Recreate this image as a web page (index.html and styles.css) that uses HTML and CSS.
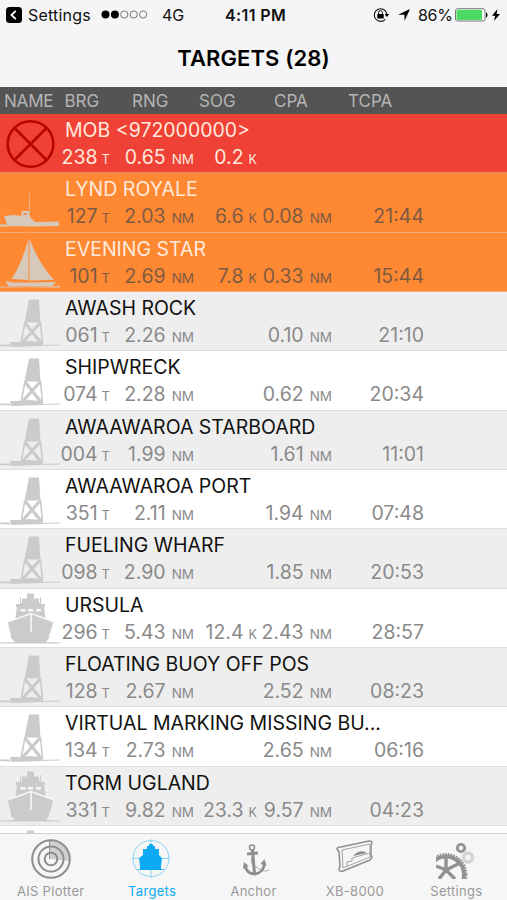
FILE: index.html
```
<!DOCTYPE html>
<html lang="en">
  <head>
    <meta charset="UTF-8" />
    <meta name="viewport" content="width=device-width, initial-scale=1.0" />
    <title>Targets</title>
    <link rel="stylesheet" href="styles.css">
  </head>
  <body>
    <!-- Shared vessel icons -->
    <svg class="sprite" aria-hidden="true">
      <symbol id="icon-mob" viewBox="0 0 60 59">
        <g fill="none" stroke="#b80500" stroke-width="2.6">
          <circle cx="30.5" cy="30" r="22.8" />
          <path d="M14.5 14 46.5 46M46.5 14 14.5 46" />
        </g>
      </symbol>
      <symbol id="icon-boat" viewBox="0 0 60 59">
        <path d="M29 20h1v20h-1z" opacity=".6" />
        <path d="M4 43l10-1 7 1 1-5h7l1 6 5 5 24-.500v4.500l-26 .500-26-.500-1-5z" />
        <path d="M0 51.500h10v2H0z" />
        <path d="M23.500 40h3v2h-3z" fill="#e98a4c" />
      </symbol>
      <symbol id="icon-sail" viewBox="0 0 60 59">
        <path d="M28.500 6v41l-17-1C18 37 24 22 28.500 6z" />
        <path d="M29.500 6c6 16 15 31 24.500 41l-24.500.500z" />
        <path d="M5 48l8 1.500h20L56 49l-4 4.500H9z" />
        <path d="M0 53.500c20 1 40 1 60-.500v1.500H0z" />
      </symbol>
      <symbol id="icon-buoy" viewBox="0 0 60 59">
        <path d="M29 7.500h10l1.500 23H24.500z" />
        <g fill="none" stroke="currentColor" stroke-width="1.600">
          <path d="M25 30l-4 22M40.500 30l2 22" />
          <path d="M25 31l16 20M40 31 22 51" stroke-width="3.200" />
        </g>
        <path d="M10 50h11l8-1 13 1 1 4-32 1z" />
        <path d="M0 52.500l10 0v2L0 54z" />
        <path d="M40 53l20-.500v1l-20 .500z" />
      </symbol>
      <symbol id="icon-ship" viewBox="0 0 60 59">
        <path d="M27 4.500h7v5h5V14h1V8h1v7h4v3h-1l2 14H15l2-14h-1v-3h4V8h1v6h1V9.500h5z" />
        <path d="M30.500 24 53 33c-1 8-4 11-4 16l-3 4H15l-4-4c0-5-2-8-3-16z" />
        <path d="M20.500 20h5v2.500h-5zM28 20h5v2.500h-5zM36 20h5v2.500h-5z" class="cut" />
        <path d="M9 32.500 31 24.500l22 8M31 25v18" class="cut-line" />
        <path d="M0 53.500c20-1 40-1 60 0v1H0z" />
      </symbol>
    </svg>

    <div class="status-bar">
      <svg class="back-icon" width="16" height="16" viewBox="0 0 16 16">
        <rect width="16" height="16" rx="3.500" />
        <path d="M9.800 3.800 5.400 8l4.400 4.200" fill="none" stroke="#fff" stroke-width="1.800" />
      </svg>
      <span class="back-label">Settings</span>
      <svg class="signal" width="47" height="9" viewBox="0 0 47 9">
        <circle cx="4.500" cy="4.500" r="4" />
        <circle cx="13.900" cy="4.500" r="4" />
        <g fill="none" stroke="#555" stroke-width=".8">
          <circle cx="23.300" cy="4.500" r="3.600" />
          <circle cx="32.700" cy="4.500" r="3.600" />
          <circle cx="42.100" cy="4.500" r="3.600" />
        </g>
      </svg>
      <span class="network">4G</span>
      <span class="clock">4:11 PM</span>
      <svg class="lock-icon" width="17" height="16" viewBox="0 0 17 16">
        <path d="M12.300 12.300A6.300 6.300 0 1 1 13.800 7" fill="none" stroke="#111" stroke-width="1.100" />
        <path d="M11.600 7h4.600l-2.300 3z" />
        <rect x="4.300" y="7" width="6.400" height="4.600" rx=".6" />
        <path d="M5.600 7V5.600a1.900 1.900 0 0 1 3.800 0V7" fill="none" stroke="#111" />
      </svg>
      <svg class="location-icon" width="12" height="12" viewBox="0 0 12 12">
        <path d="M12 0 6.500 12V5.700H0z" />
      </svg>
      <span class="percent">86%</span>
      <svg class="battery" width="34" height="14" viewBox="0 0 34 14">
        <rect x=".5" y=".7" width="29.500" height="12.300" rx="2" fill="#fff" stroke="#777" />
        <rect x="1.500" y="1.700" width="25.500" height="10.300" rx="1" fill="#4cd964" />
        <path d="M31 4.500c2 .5 2 4.500 0 5z" />
      </svg>
      <svg class="bolt" width="8" height="12" viewBox="0 0 8 12">
        <path d="M5.500 0 0 6.700h3.200L2 12l6-7H4.600z" />
      </svg>
    </div>

    <h1 class="title">TARGETS (28)</h1>

    <div class="columns">
      <span class="col-name">NAME</span>
      <span class="col-brg">BRG</span>
      <span class="col-rng">RNG</span>
      <span class="col-sog">SOG</span>
      <span class="col-cpa">CPA</span>
      <span>TCPA</span>
    </div>

    <div id="targetList"></div>

    <nav class="tab-bar">
      <div class="tab">
        <svg width="40" height="40" viewBox="0 0 40 40">
          <path d="M18 20V1a19 19 0 0 1 21 21z" fill="#d0d0d0" />
          <path d="M18.500 20V1" stroke="#8e8e8e" />
          <g fill="none" stroke="#8e8e8e" stroke-width="2">
            <circle cx="20" cy="20" r="18.800" />
            <circle cx="20" cy="20" r="12.500" />
            <circle cx="20" cy="20" r="6.300" />
          </g>
        </svg>
        <span>AIS Plotter</span>
      </div>
      <div class="tab active">
        <svg width="40" height="40" viewBox="0 0 40 40">
          <g fill="none" stroke="#8ed2f5">
            <circle cx="19" cy="19.500" r="18" />
            <path d="M19 0v39M0 19.500h38" />
          </g>
          <path d="M17 7V5h4v2h2v3h4v6l3 3-1 8v3l5 1H4l4-1v-3l-1-8 4-3v-6h4V7z" fill="#0caaf2" />
        </svg>
        <span>Targets</span>
      </div>
      <div class="tab">
        <svg width="40" height="40" viewBox="0 0 40 40">
          <g fill="none" stroke="#8e8e8e">
            <circle cx="18" cy="8.500" r="2.500" stroke-width="1.600" />
            <path d="M18.500 11l2 24" stroke-width="3" />
            <path d="M13 15l11-1" stroke-width="2.800" />
            <path d="M11 26c1 6 5 9 10 9 6-1 9-5 9.500-11" stroke-width="2.800" />
            <path d="M18 18c-2 5 0 8 4 10s8 6 13 3" stroke-width=".7" />
          </g>
          <path d="M9 30l1-7 4.500 4zM26.500 25l4-5 2 7z" fill="#8e8e8e" />
        </svg>
        <span>Anchor</span>
      </div>
      <div class="tab">
        <svg width="40" height="40" viewBox="0 0 40 40">
          <g fill="none" stroke="#8e8e8e" stroke-linejoin="round">
            <path d="M6 8 34 2c2 0 3 0 3 2l-1 2v10l1 2-2 3L8 32c-2 1-4 0-4-2l1-3L4 13 2 10c0-2 2-2 4-2z" stroke-width="1.500" />
            <path d="M7 11l28-6v13L8 29zM12 28v-5l5-1v-3l18-5" stroke-width=".8" />
          </g>
          <path d="M18 17c4-5 10-6 14-3z" fill="#8e8e8e" />
        </svg>
        <span>XB-8000</span>
      </div>
      <div class="tab">
        <svg width="40" height="40" viewBox="0 0 40 40">
          <g fill="none" stroke="#929292">
            <circle cx="10" cy="35.500" r="18" stroke-width="4" />
            <circle cx="10" cy="35.500" r="20.500" stroke-width="2" stroke-dasharray="1.600 1.200" />
            <path d="M10 18v12M10 31 0 27M10 31l14-7M10 31 3 40M10 31l9 9" stroke-width="3.400" />
            <circle cx="25" cy="9" r="3.700" stroke-width="2.800" />
            <circle cx="32" cy="18.500" r="4.500" stroke="#d4d4d4" stroke-width="3.500" />
          </g>
        </svg>
        <span>Settings</span>
      </div>
    </nav>

    <script src="script.js"></script>
  </body>
</html>
```
FILE: styles.css
```
body {
  font-family: Inter, "Liberation Sans", sans-serif;
  margin: 0;
  height: 900px;
  display: flex;
  flex-direction: column;
  overflow: hidden;
  background-color: #f5f5f7;
  color: #111;
}

.sprite {
  position: absolute;
  width: 0;
  height: 0;
}

/* Status bar */
.status-bar {
  display: flex;
  align-items: center;
  height: 29px;
  padding: 0 6px;
  font-size: 16px;
  flex-shrink: 0;
}

.back-label {
  margin-left: 6px;
  width: 73px;
  letter-spacing: 0.2px;
}

.network {
  margin-left: 14px;
  width: 63px;
}

.clock {
  width: 148px;
  font-weight: 600;
  letter-spacing: 0.4px;
}

.location-icon {
  margin-left: 8px;
}

.percent {
  margin-left: 8px;
  width: 37px;
  letter-spacing: -0.3px;
}

.bolt {
  margin-left: 3px;
}

.title {
  margin: 0;
  height: 58px;
  line-height: 58px;
  font-size: 22px;
  font-weight: 600;
  letter-spacing: 0.1px;
  text-align: center;
  color: #000;
  flex-shrink: 0;
}

/* Column headings */
.columns {
  display: flex;
  align-items: center;
  height: 27px;
  padding-left: 4px;
  flex-shrink: 0;
  background-color: #545454;
  color: #b4b4b4;
  font-size: 17px;
}

.col-name {
  width: 60.5px;
  letter-spacing: -0.2px;
}

.col-brg {
  width: 67.5px;
}

.col-rng {
  width: 67px;
}

.col-sog {
  width: 75px;
}

.col-cpa {
  width: 74px;
}

/* Target rows */
#targetList {
  flex: 1;
  overflow: hidden;
}

.target {
  display: flex;
  height: 59.33px;
  box-sizing: border-box;
  border-bottom: 1px solid #dedede;
  background-color: #fff;
  color: #cbcbcb;
}

.target:nth-child(even) {
  background-color: #eee;
}

.target .icon {
  width: 60px;
  height: 59px;
  flex-shrink: 0;
  fill: currentColor;
}

.cut {
  fill: #f8f8f8;
}

.cut-line {
  fill: none;
  stroke: #f8f8f8;
  stroke-width: 1.6;
}

.name {
  padding: 4px 0 0 5px;
  font-size: 19.5px;
  line-height: 24px;
  color: #111;
}

.readings {
  display: grid;
  grid-template-columns: 50px 84px 63px 75px 92px;
  line-height: 30px;
  font-size: 19.5px;
  color: #8a8a8a;
  text-align: right;
  white-space: nowrap;
}

.unit {
  margin-left: 6px;
  font-size: 13.5px;
}

.unit-T {
  margin-left: 4px;
  font-size: 13px;
}

.unit-K {
  margin-left: 5px;
  font-size: 12.5px;
}

.target.alarm {
  background-color: #ef4136;
  border-color: #e58a6a;
}

.target.warning {
  background-color: #ff8832;
  border-color: #f3a873;
  color: #d6c9bc;
}

.alarm .name,
.alarm .readings,
.warning .name {
  color: #ffe9dc;
}

.warning .readings {
  color: #7d5b42;
}

/* Bottom tabs */
.tab-bar {
  display: flex;
  height: 66px;
  flex-shrink: 0;
  border-top: 1px solid #d0d0d0;
  background-color: #f6f6f6;
}

.tab {
  flex: 1;
  display: flex;
  flex-direction: column;
  align-items: center;
  padding-top: 5px;
  font-size: 13px;
  line-height: 24px;
  letter-spacing: 0.3px;
  color: #999;
}

.tab svg {
  flex-shrink: 0;
}

.tab.active {
  color: #0caaf2;
}
```
FILE: script.js
```
const targets = [
  { name: "MOB <972000000>", icon: "mob", brg: "238", rng: "0.65", sog: "0.2", level: "alarm" },
  { name: "LYND ROYALE", icon: "boat", brg: "127", rng: "2.03", sog: "6.6", cpa: "0.08", tcpa: "21:44", level: "warning" },
  { name: "EVENING STAR", icon: "sail", brg: "101", rng: "2.69", sog: "7.8", cpa: "0.33", tcpa: "15:44", level: "warning" },
  { name: "AWASH ROCK", icon: "buoy", brg: "061", rng: "2.26", cpa: "0.10", tcpa: "21:10" },
  { name: "SHIPWRECK", icon: "buoy", brg: "074", rng: "2.28", cpa: "0.62", tcpa: "20:34" },
  { name: "AWAAWAROA STARBOARD", icon: "buoy", brg: "004", rng: "1.99", cpa: "1.61", tcpa: "11:01" },
  { name: "AWAAWAROA PORT", icon: "buoy", brg: "351", rng: "2.11", cpa: "1.94", tcpa: "07:48" },
  { name: "FUELING WHARF", icon: "buoy", brg: "098", rng: "2.90", cpa: "1.85", tcpa: "20:53" },
  { name: "URSULA", icon: "ship", brg: "296", rng: "5.43", sog: "12.4", cpa: "2.43", tcpa: "28:57" },
  { name: "FLOATING BUOY OFF POS", icon: "buoy", brg: "128", rng: "2.67", cpa: "2.52", tcpa: "08:23" },
  { name: "VIRTUAL MARKING MISSING BU...", icon: "buoy", brg: "134", rng: "2.73", cpa: "2.65", tcpa: "06:16" },
  { name: "TORM UGLAND", icon: "ship", brg: "331", rng: "9.82", sog: "23.3", cpa: "9.57", tcpa: "04:23" },
  { name: "", icon: "ship" }
];

const list = document.getElementById("targetList");

// One reading with its small unit, blank when there is no value
function reading(value, unit) {
  return `<span>${value ? `${value}<span class="unit unit-${unit}">${unit}</span>` : ""}</span>`;
}

targets.forEach((target) => {
  const row = document.createElement("div");
  row.className = `target ${target.level || ""}`;
  row.innerHTML = `
    <svg class="icon"><use href="#icon-${target.icon}"></use></svg>
    <div>
      <div class="name"></div>
      <div class="readings">
        ${reading(target.brg, "T")}
        ${reading(target.rng, "NM")}
        ${reading(target.sog, "K")}
        ${reading(target.cpa, "NM")}
        <span>${target.tcpa || ""}</span>
      </div>
    </div>`;
  row.querySelector(".name").textContent = target.name;
  list.appendChild(row);
});
```
